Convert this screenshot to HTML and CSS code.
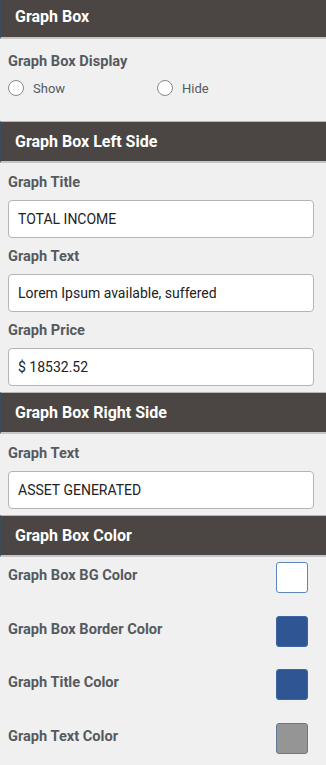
FILE: index.html
```html
<!DOCTYPE html>
<html>
<head>
<meta charset="utf-8">
<link rel="stylesheet" href="styles.css">
</head>
<body>
<div class="panel">
  <section class="section">
    <h2 class="head head-first">Graph Box</h2>
    <div class="body body-display">
      <div class="label">Graph Box Display</div>
      <div class="radios">
        <label class="radio"><span class="circle"></span>Show</label>
        <label class="radio"><span class="circle"></span>Hide</label>
      </div>
    </div>
  </section>
  <section class="section">
    <h2 class="head">Graph Box Left Side</h2>
    <div class="body">
      <div class="label">Graph Title</div>
      <div class="input">TOTAL INCOME</div>
      <div class="label">Graph Text</div>
      <div class="input">Lorem Ipsum available, suffered</div>
      <div class="label">Graph Price</div>
      <div class="input">$ 18532.52</div>
    </div>
  </section>
  <section class="section">
    <h2 class="head">Graph Box Right Side</h2>
    <div class="body">
      <div class="label">Graph Text</div>
      <div class="input">ASSET GENERATED</div>
    </div>
  </section>
  <section class="section">
    <h2 class="head">Graph Box Color</h2>
    <div class="colors">
      <div class="crow"><span class="clabel">Graph Box BG Color</span><span class="swatch sw-white"></span></div>
      <div class="crow"><span class="clabel">Graph Box Border Color</span><span class="swatch sw-blue"></span></div>
      <div class="crow"><span class="clabel">Graph Title Color</span><span class="swatch sw-blue"></span></div>
      <div class="crow"><span class="clabel">Graph Text Color</span><span class="swatch sw-gray"></span></div>
    </div>
  </section>
</div>
</body>
</html>
```
FILE: styles.css
```css
* { box-sizing: border-box; }
html, body { margin: 0; padding: 0; }
body {
  background: #f0f0f0;
  font-family: Roboto, "Liberation Sans", sans-serif;
  width: 326px;
  height: 765px;
  overflow: hidden;
}
.panel { display: flex; flex-direction: column; }
.head {
  margin: 0;
  height: 42px;
  padding-left: 14px;
  display: flex;
  align-items: center;
  background: #4b4643;
  color: #fff;
  font-size: 16px;
  font-weight: 700;
  border-left: 1px solid #3b4d5a;
  border-top: 1px solid #b8b8b8;
  border-bottom: 2px solid #c6c6c6;
}
.head-first { height: 39px; border-top: none; padding-bottom: 4px; }
.body {
  display: flex;
  flex-direction: column;
  padding: 10px 12px 6px 8px;
}
.body-display { padding-top: 13px; padding-bottom: 14px; height: 82px; }
.label {
  font-size: 14.6px;
  font-weight: 700;
  color: #555a60;
  line-height: 18px;
  margin-bottom: 9px;
}
.input {
  height: 38px;
  background: #fff;
  border: 1px solid #b4b4b4;
  border-radius: 4px;
  padding-left: 9px;
  display: flex;
  align-items: center;
  font-size: 14px;
  color: #222;
  margin-bottom: 9px;
}
.input:last-child { margin-bottom: 0; }
.radios { display: flex; margin-top: 1px; }
.radio {
  display: flex;
  align-items: center;
  font-size: 13px;
  color: #555a60;
  width: 149px;
}
.circle {
  width: 16px;
  height: 16px;
  border: 1px solid #8a8a8a;
  border-radius: 50%;
  background: #fff;
  margin-right: 9px;
}
.colors {
  display: flex;
  flex-direction: column;
  padding: 5px 18px 0 8px;
}
.crow {
  height: 53.5px;
  display: flex;
  justify-content: space-between;
  align-items: flex-start;
}
.clabel {
  font-size: 14.6px;
  font-weight: 700;
  color: #555a60;
  line-height: 18px;
  margin-top: 4px;
}
.swatch {
  width: 32px;
  height: 31px;
  border-radius: 3px;
  border: 1px solid #2d5b9a;
}
.sw-white { background: #fff; border-color: #5f86b8; }
.sw-blue { background: #2f5592; border-color: #3b66a4; }
.sw-gray { background: #959595; border-color: #5f7a9a; }
```
